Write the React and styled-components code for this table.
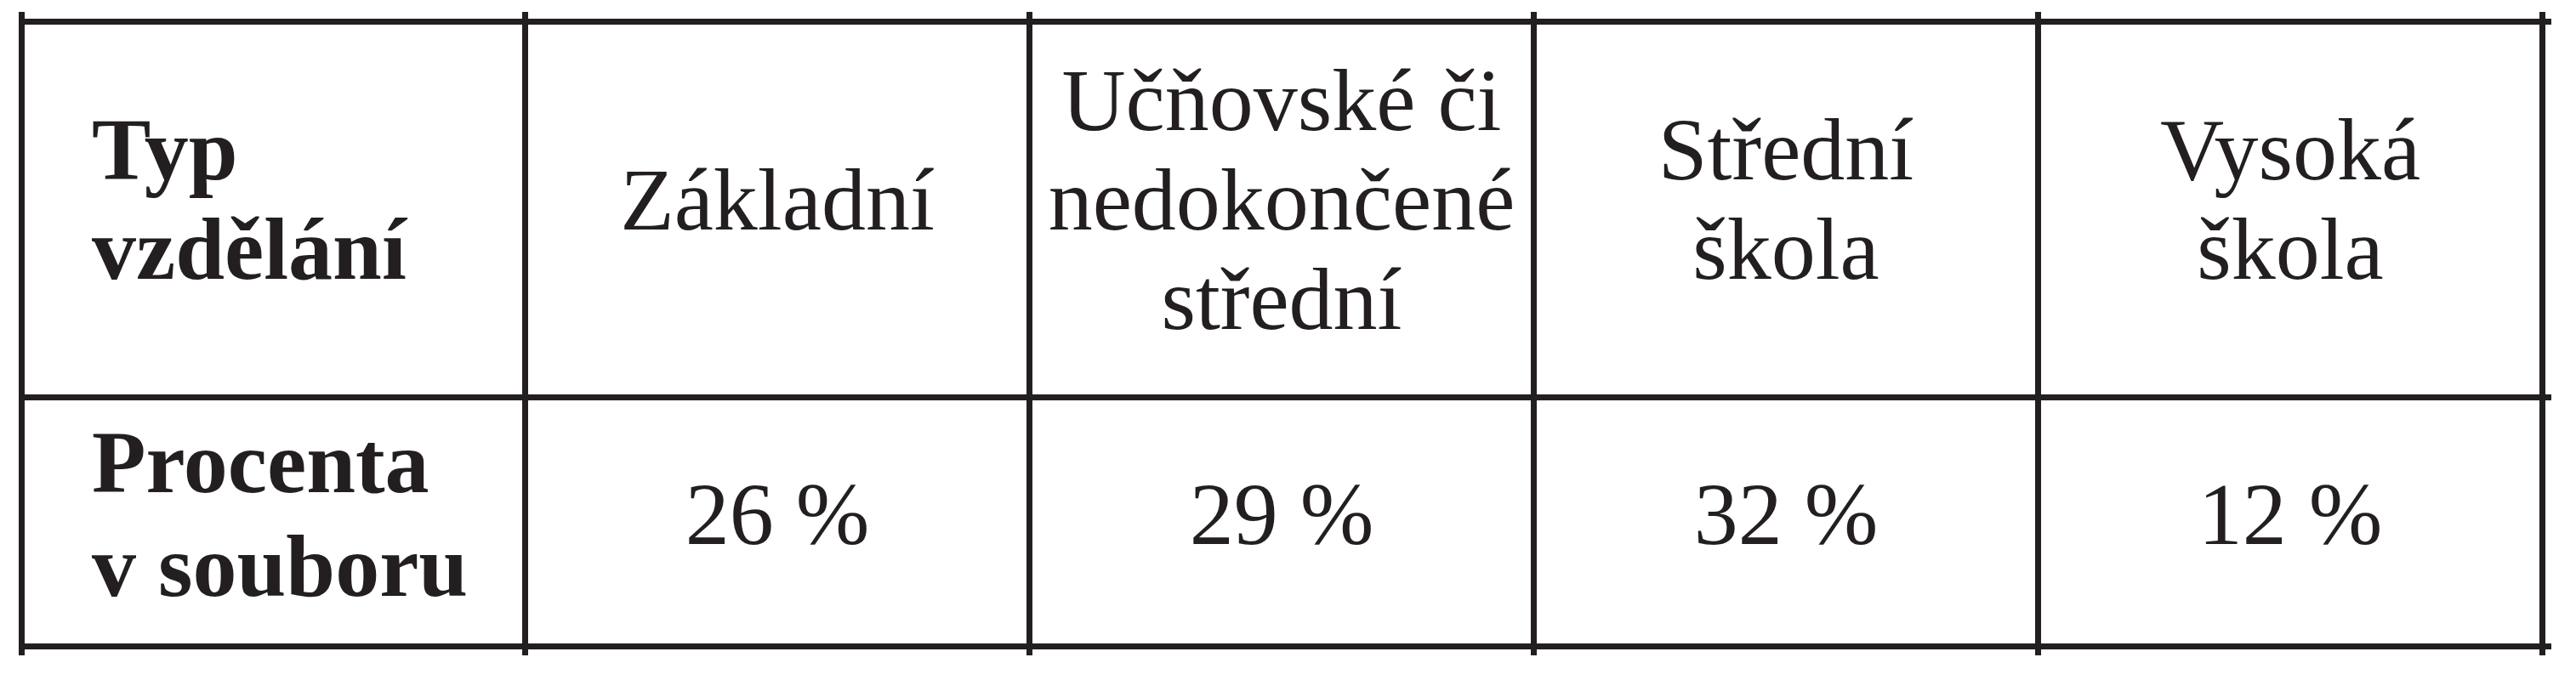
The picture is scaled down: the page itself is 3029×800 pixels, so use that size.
import React from "react";
import styled, { createGlobalStyle } from "styled-components";

const GlobalStyle = createGlobalStyle`
  html, body {
    margin: 0;
    padding: 0;
    background: #fff;
  }
  body {
    font-family: "Liberation Serif", "Times New Roman", serif;
    color: #231f20;
  }
`;

const INK = "#231f20";
const COLS = "585px repeat(4, 586px)";

const Page = styled.div`
  padding: 14px 0 0 22px;
`;

const Frame = styled.div`
  display: flex;
  flex-direction: column;
  width: max-content;
`;

// the printed rules run a little past the table edges
const TickRow = styled.div`
  display: grid;
  grid-template-columns: ${COLS};
  column-gap: 7px;
  padding: 0 7px;
  height: ${(p) => p.$h}px;
  width: max-content;
  background: ${INK};
`;

const Blank = styled.div`
  background: #fff;
`;

const Middle = styled.div`
  display: flex;
`;

const SideTicks = styled.div`
  display: grid;
  grid-template-rows: 7px 435px 7px 286px 7px;
  width: 7px;
`;

const Rule = styled.div`
  background: ${(p) => (p.$on ? INK : "#fff")};
`;

// table lines are the dark background showing through the grid gaps
const Table = styled.div`
  display: grid;
  grid-template-columns: ${COLS};
  grid-template-rows: 435px 286px;
  gap: 7px;
  padding: 7px;
  width: max-content;
  background: ${INK};
`;

const Cell = styled.div`
  display: flex;
  align-items: center;
  justify-content: ${(p) => (p.$label ? "flex-start" : "center")};
  text-align: ${(p) => (p.$label ? "left" : "center")};
  padding: ${(p) => (p.$label ? "0 0 0 79px" : "0")};
  padding-bottom: ${(p) => (p.$body ? "18px" : "25px")};
  background: #fff;
  font-size: 104px;
  font-weight: ${(p) => (p.$label ? 700 : 400)};
  line-height: ${(p) => (p.$body ? "122px" : "117px")};
  white-space: nowrap;
`;

const header = [
  ["Základní"],
  ["Učňovské či", "nedokončené", "střední"],
  ["Střední", "škola"],
  ["Vysoká", "škola"],
];

const values = ["26 %", "29 %", "32 %", "12 %"];

function Lines({ items }) {
  return (
    <div>
      {items.map((t, i) => (
        <div key={i}>{t}</div>
      ))}
    </div>
  );
}

function Ticks({ h }) {
  return (
    <TickRow $h={h}>
      {[0, 1, 2, 3, 4].map((i) => (
        <Blank key={i} />
      ))}
    </TickRow>
  );
}

export default function App() {
  return (
    <Page>
      <GlobalStyle />
      <Frame>
        <Ticks h={8} />
        <Middle>
          <Table>
            <Cell $label>
              <Lines items={["Typ", "vzdělání"]} />
            </Cell>
            {header.map((h, i) => (
              <Cell key={i}>
                <Lines items={h} />
              </Cell>
            ))}
            <Cell $label $body>
              <Lines items={["Procenta", "v souboru"]} />
            </Cell>
            {values.map((v) => (
              <Cell key={v} $body>
                {v}
              </Cell>
            ))}
          </Table>
          <SideTicks>
            <Rule $on />
            <Rule />
            <Rule $on />
            <Rule />
            <Rule $on />
          </SideTicks>
        </Middle>
        <Ticks h={7} />
      </Frame>
    </Page>
  );
}
